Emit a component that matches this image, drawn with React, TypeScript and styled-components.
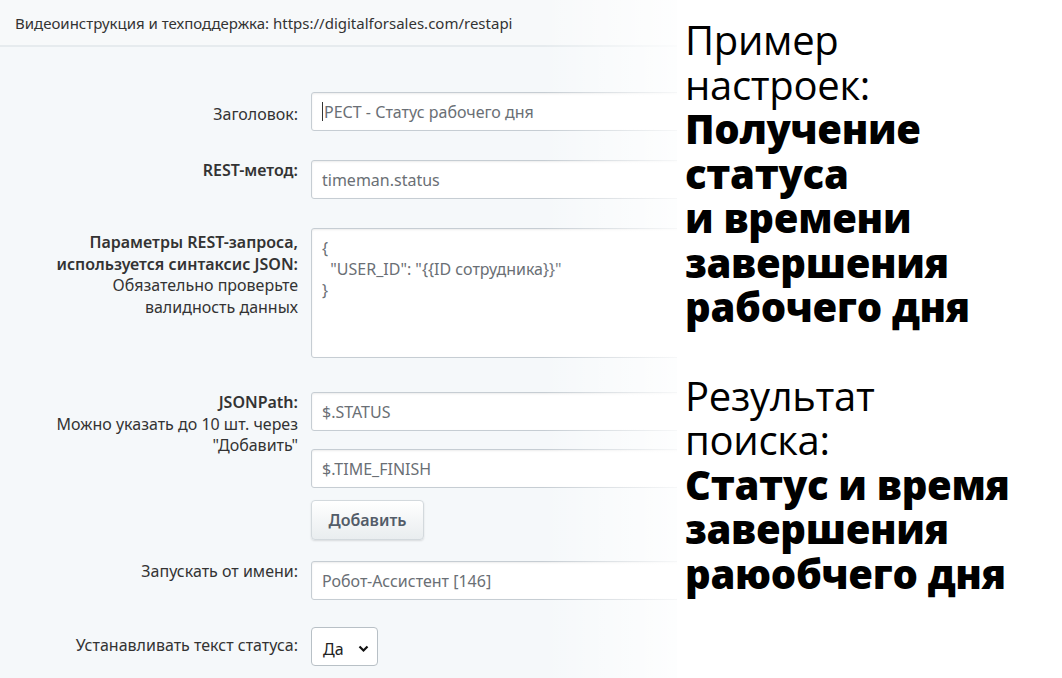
import React from 'react';
import styled, { createGlobalStyle } from 'styled-components';

const GlobalStyle = createGlobalStyle`
  html, body {
    margin: 0;
    padding: 0;
    background: #f5f8fa;
  }
  body {
    font-family: "Noto Sans", "Open Sans", sans-serif;
    color: #333;
    overflow: hidden;
  }
`;

const Page = styled.div`
  position: relative;
  width: 1062px;
  height: 678px;
  overflow: hidden;
  background: #f5f8fa;
`;

const TopBar = styled.div`
  height: 45px;
  padding: 0 15px;
  display: flex;
  align-items: center;
  font-size: 15px;
  color: #333;
  border-bottom: 2px solid #e6ebee;
  background: #f7f9fa;
`;

const Form = styled.div`
  display: flex;
  flex-direction: column;
  padding-top: 45px;
`;

const Row = styled.div<{ $gap: number }>`
  display: grid;
  grid-template-columns: 298px 720px;
  column-gap: 13px;
  margin-bottom: ${(p) => p.$gap}px;
`;

const Label = styled.div<{ $top: number }>`
  text-align: right;
  font-size: 16px;
  line-height: 21.5px;
  color: #333;
  padding-top: ${(p) => p.$top}px;
  white-space: nowrap;
`;

const Strong = styled.span`
  font-weight: 600;
`;

const Field = styled.div`
  display: flex;
  flex-direction: column;
  align-items: flex-start;
  gap: 18px;
`;

const Input = styled.div`
  box-sizing: border-box;
  width: 100%;
  height: 39px;
  padding: 0 10px;
  display: flex;
  align-items: center;
  background: #fff;
  border: 1px solid #c6cdd3;
  border-radius: 3px;
  box-shadow: inset 0 1px 2px rgba(0, 0, 0, 0.08);
  font-size: 16px;
  color: #6a6f75;
`;

const Caret = styled.span`
  display: inline-block;
  width: 1px;
  height: 19px;
  background: #333;
  margin-right: 1px;
`;

const TextArea = styled.div`
  box-sizing: border-box;
  width: 100%;
  height: 130px;
  padding: 9px 10px;
  background: #fff;
  border: 1px solid #c6cdd3;
  border-radius: 3px;
  box-shadow: inset 0 1px 2px rgba(0, 0, 0, 0.08);
  font-size: 16px;
  line-height: 21px;
  color: #6a6f75;
  white-space: pre;
`;

const Button = styled.div`
  box-sizing: border-box;
  width: 113px;
  height: 40px;
  margin-top: -6px;
  display: flex;
  align-items: center;
  justify-content: center;
  border: 1px solid #d3d9dd;
  border-radius: 4px;
  background: linear-gradient(#ffffff, #e9edef);
  box-shadow: 0 1px 2px rgba(0, 0, 0, 0.12);
  font-size: 16px;
  font-weight: 600;
  color: #535c69;
`;

const Select = styled.div`
  box-sizing: border-box;
  width: 67px;
  height: 39px;
  padding: 4px 8px 0 11px;
  display: flex;
  align-items: center;
  justify-content: space-between;
  background: #fff;
  border: 1px solid #b8c0c6;
  border-radius: 4px;
  font-size: 16px;
  color: #222;
`;

const Overlay = styled.div`
  position: absolute;
  top: 0;
  right: 0;
  bottom: 0;
  width: 520px;
  display: flex;
  pointer-events: none;
`;

const Fade = styled.div`
  width: 135px;
  background: linear-gradient(to right, rgba(255, 255, 255, 0), rgba(255, 255, 255, 0.85));
`;

const Note = styled.div`
  flex: 1;
  background: #fff;
  padding: 18px 0 0 8px;
  font-family: "Open Sans", "Noto Sans", sans-serif;
  font-size: 40px;
  line-height: 44.5px;
  color: #000;
  letter-spacing: -0.3px;
`;

const Block = styled.div`
  margin-bottom: 44px;
`;

const Heavy = styled.div`
  font-weight: 800;
`;

const Chevron = () => (
  <svg width="11" height="8" viewBox="0 0 11 8">
    <path d="M1.5 1.5 L5.5 5.5 L9.5 1.5" fill="none" stroke="#111" strokeWidth="2.2" />
  </svg>
);

const App: React.FC = () => {
  return (
    <>
      <GlobalStyle />
      <Page>
        <TopBar>Видеоинструкция и техподдержка: https://digitalforsales.com/restapi</TopBar>
        <Form>
          <Row $gap={29}>
            <Label $top={12}>Заголовок:</Label>
            <Input>
              <Caret />
              РЕСТ - Статус рабочего дня
            </Input>
          </Row>
          <Row $gap={29}>
            <Label $top={0}>
              <Strong>REST-метод:</Strong>
            </Label>
            <Input>timeman.status</Input>
          </Row>
          <Row $gap={34}>
            <Label $top={4}>
              <Strong>Параметры REST-запроса,</Strong>
              <br />
              <Strong>используется синтаксис JSON:</Strong>
              <br />
              Обязательно проверьте
              <br />
              валидность данных
            </Label>
            <TextArea>{'{\n  "USER_ID": "{{ID сотрудника}}"\n}'}</TextArea>
          </Row>
          <Row $gap={21}>
            <Label $top={-4}>
              <Strong>JSONPath:</Strong>
              <br />
              Можно указать до 10 шт. через
              <br />
              "Добавить"
            </Label>
            <Field>
              <Input>$.STATUS</Input>
              <Input>$.TIME_FINISH</Input>
              <Button>Добавить</Button>
            </Field>
          </Row>
          <Row $gap={27}>
            <Label $top={0}>Запускать от имени:</Label>
            <Input>Робот-Ассистент [146]</Input>
          </Row>
          <Row $gap={0}>
            <Label $top={8}>Устанавливать текст статуса:</Label>
            <Select>
              <span>Да</span>
              <Chevron />
            </Select>
          </Row>
        </Form>
        <Overlay>
          <Fade />
          <Note>
            <Block>
              <div>Пример</div>
              <div>настроек:</div>
              <Heavy>Получение</Heavy>
              <Heavy>статуса</Heavy>
              <Heavy>и времени</Heavy>
              <Heavy>завершения</Heavy>
              <Heavy>рабочего дня</Heavy>
            </Block>
            <Block>
              <div>Результат</div>
              <div>поиска:</div>
              <Heavy>Статус и время</Heavy>
              <Heavy>завершения</Heavy>
              <Heavy>раюобчего дня</Heavy>
            </Block>
          </Note>
        </Overlay>
      </Page>
    </>
  );
};

export default App;
